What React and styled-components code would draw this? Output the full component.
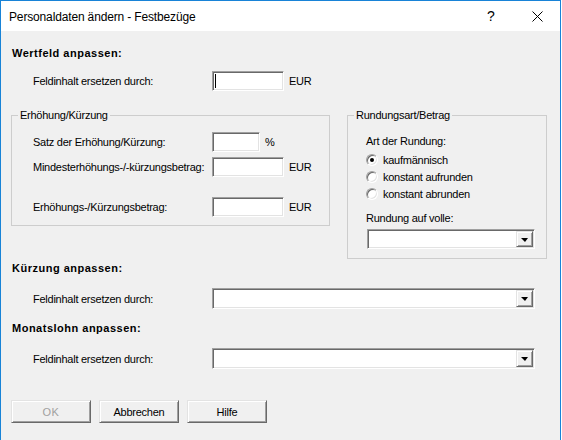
import React from "react";
import styled, { createGlobalStyle } from "styled-components";

const GlobalStyle = createGlobalStyle`
  html, body {
    margin: 0;
    padding: 0;
    background: #ffffff;
  }
  * {
    box-sizing: border-box;
  }
`;

const Window = styled.div`
  width: 561px;
  height: 440px;
  border: 1px solid #1883d7;
  border-bottom: none;
  background: #f0f0f0;
  display: flex;
  flex-direction: column;
  overflow: hidden;
  font-family: "Liberation Sans", Arial, sans-serif;
  font-size: 11px;
  letter-spacing: -0.25px;
  color: #000;
`;

const TitleBar = styled.div`
  height: 30px;
  background: #ffffff;
  display: flex;
  align-items: center;
  flex-shrink: 0;
`;

const Title = styled.div`
  flex: 1;
  padding-left: 8px;
  font-size: 12px;
  letter-spacing: -0.15px;
  padding-top: 1px;
`;

const CaptionButton = styled.div`
  width: 46px;
  height: 30px;
  display: flex;
  align-items: center;
  justify-content: center;
  font-size: 14px;
  letter-spacing: 0;
`;

const Body = styled.div`
  flex: 1;
  padding: 15px 0 0 10px;
  display: flex;
  flex-direction: column;
`;

const Heading = styled.div`
  font-weight: bold;
  letter-spacing: 0.5px;
  line-height: 14px;
  height: 14px;
  padding-left: 1px;
  margin-top: ${(p) => p.$mt || 0}px;
`;

const Row = styled.div`
  display: flex;
  align-items: center;
  height: ${(p) => p.$h || 20}px;
  margin-top: ${(p) => p.$mt || 0}px;
  padding-left: ${(p) => p.$indent ?? 22}px;
`;

const Label = styled.div`
  width: 179px;
  flex-shrink: 0;
  line-height: 14px;
`;

const Unit = styled.div`
  margin-left: 5px;
`;

const Edit = styled.div`
  width: ${(p) => p.$w || 72}px;
  height: 20px;
  background: #ffffff;
  border: 1px solid;
  border-color: #a0a0a0 #ffffff #ffffff #a0a0a0;
  box-shadow: inset 1px 1px 0 #696969, inset -1px -1px 0 #e3e3e3;
  display: flex;
  align-items: center;
  padding-left: 2px;
`;

const Caret = styled.span`
  width: 1px;
  height: 14px;
  background: #000;
`;

const Combo = styled.div`
  width: ${(p) => p.$w || 323}px;
  height: ${(p) => p.$h || 21}px;
  background: #ffffff;
  border: 1px solid;
  border-color: #a0a0a0 #ffffff #ffffff #a0a0a0;
  box-shadow: inset 1px 1px 0 #696969, inset -1px -1px 0 #e3e3e3;
  display: flex;
  justify-content: flex-end;
  padding: 1px;
`;

const DropButton = styled.div`
  width: 17px;
  height: 100%;
  background: #f0f0f0;
  border: 1px solid;
  border-color: #e3e3e3 #696969 #696969 #e3e3e3;
  box-shadow: inset 1px 1px 0 #ffffff, inset -1px -1px 0 #a0a0a0;
  display: flex;
  align-items: center;
  justify-content: center;
`;

const Arrow = styled.span`
  width: 0;
  height: 0;
  border-left: 4px solid transparent;
  border-right: 3px solid transparent;
  border-top: 4px solid #000;
  margin-top: 1px;
`;

const GroupRow = styled.div`
  display: flex;
  align-items: flex-start;
  gap: 17px;
  margin-top: 17px;
`;

const Group = styled.fieldset`
  width: ${(p) => p.$w}px;
  margin: 0;
  padding: 0;
  min-width: 0;
  border: 1px solid #cdcdcd;
`;

const Legend = styled.legend`
  margin-left: 6px;
  padding: 0 2px;
  line-height: 14px;
`;

const GroupContent = styled.div`
  padding: ${(p) => p.$pad};
  display: flex;
  flex-direction: column;
`;

const Text = styled.div`
  line-height: 14px;
  margin-top: ${(p) => p.$mt || 0}px;
`;

const RadioRow = styled.div`
  display: flex;
  align-items: center;
  height: 17px;
  margin-top: ${(p) => p.$mt || 0}px;
`;

const RadioCircle = styled.span`
  width: 12px;
  height: 12px;
  border-radius: 50%;
  background: #ffffff;
  border: 1px solid;
  border-color: #a0a0a0 #ffffff #ffffff #a0a0a0;
  box-shadow: inset 1px 1px 0 #696969, inset -1px -1px 0 #e3e3e3;
  display: flex;
  align-items: center;
  justify-content: center;
  margin-right: 5px;
  flex-shrink: 0;
  &::after {
    content: "";
    width: 4px;
    height: 4px;
    border-radius: 50%;
    background: ${(p) => (p.$checked ? "#000" : "transparent")};
  }
`;

const ButtonBar = styled.div`
  display: flex;
  gap: 8px;
  margin-top: 31px;
`;

const Button = styled.div`
  width: 80px;
  height: 23px;
  background: #f0f0f0;
  border: 1px solid;
  border-color: #e3e3e3 #696969 #696969 #e3e3e3;
  box-shadow: inset 1px 1px 0 #ffffff, inset -1px -1px 0 #a0a0a0;
  display: flex;
  align-items: center;
  justify-content: center;
  color: ${(p) => (p.$disabled ? "#a0a0a0" : "#000")};
  letter-spacing: ${(p) => (p.$disabled ? "0.5px" : "-0.25px")};
`;

const CloseIcon = () => (
  <svg width="11" height="11" viewBox="0 0 11 11">
    <path d="M0.5 0.5 L10.5 10.5 M10.5 0.5 L0.5 10.5" stroke="#000" strokeWidth="1" fill="none" />
  </svg>
);

const Radio = ({ checked, children }) => (
  <RadioRow>
    <RadioCircle $checked={checked} />
    {children}
  </RadioRow>
);

export default function App() {
  return (
    <>
      <GlobalStyle />
      <Window>
        <TitleBar>
          <Title>Personaldaten ändern - Festbezüge</Title>
          <CaptionButton>?</CaptionButton>
          <CaptionButton>
            <CloseIcon />
          </CaptionButton>
        </TitleBar>
        <Body>
          <Heading>Wertfeld anpassen:</Heading>
          <Row $mt={11}>
            <Label>Feldinhalt ersetzen durch:</Label>
            <Edit>
              <Caret />
            </Edit>
            <Unit>EUR</Unit>
          </Row>

          <GroupRow>
            <Group $w={319}>
              <Legend>Erhöhung/Kürzung</Legend>
              <GroupContent $pad="10px 0 8px 0">
                <Row $indent={21}>
                  <Label>Satz der Erhöhung/Kürzung:</Label>
                  <Edit $w={48} />
                  <Unit>%</Unit>
                </Row>
                <Row $indent={21} $mt={5}>
                  <Label>Mindesterhöhungs-/-kürzungsbetrag:</Label>
                  <Edit />
                  <Unit>EUR</Unit>
                </Row>
                <Row $indent={21} $mt={20}>
                  <Label>Erhöhungs-/Kürzungsbetrag:</Label>
                  <Edit />
                  <Unit>EUR</Unit>
                </Row>
              </GroupContent>
            </Group>

            <Group $w={200}>
              <Legend>Rundungsart/Betrag</Legend>
              <GroupContent $pad="12px 0 9px 18px">
                <Text>Art der Rundung:</Text>
                <RadioRow $mt={3}>
                  <RadioCircle $checked />
                  kaufmännisch
                </RadioRow>
                <Radio>konstant aufrunden</Radio>
                <Radio>konstant abrunden</Radio>
                <Text $mt={9}>Rundung auf volle:</Text>
                <Row $indent={1} $mt={4} $h={20}>
                  <Combo $w={168} $h={20}>
                    <DropButton>
                      <Arrow />
                    </DropButton>
                  </Combo>
                </Row>
              </GroupContent>
            </Group>
          </GroupRow>

          <Heading $mt={2}>Kürzung anpassen:</Heading>
          <Row $mt={13} $h={21}>
            <Label>Feldinhalt ersetzen durch:</Label>
            <Combo>
              <DropButton>
                <Arrow />
              </DropButton>
            </Combo>
          </Row>

          <Heading $mt={12}>Monatslohn anpassen:</Heading>
          <Row $mt={13} $h={21}>
            <Label>Feldinhalt ersetzen durch:</Label>
            <Combo>
              <DropButton>
                <Arrow />
              </DropButton>
            </Combo>
          </Row>

          <ButtonBar>
            <Button $disabled>OK</Button>
            <Button>Abbrechen</Button>
            <Button>Hilfe</Button>
          </ButtonBar>
        </Body>
      </Window>
    </>
  );
}
